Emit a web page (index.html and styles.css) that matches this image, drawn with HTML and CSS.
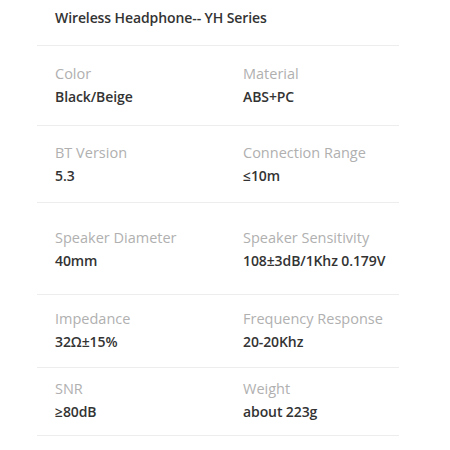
FILE: index.html
```html
<!DOCTYPE html>
<html>
<head>
<meta charset="utf-8">
<link rel="stylesheet" href="styles.css">
</head>
<body>
<div class="specs">
  <div class="row r1">
    <div class="cell">
      <div class="label">Name</div>
      <div class="value">Wireless Headphone-- YH Series</div>
    </div>
  </div>
  <div class="row r2">
    <div class="cell"><div class="label">Color</div><div class="value">Black/Beige</div></div>
    <div class="cell"><div class="label">Material</div><div class="value">ABS+PC</div></div>
  </div>
  <div class="row r3">
    <div class="cell"><div class="label">BT Version</div><div class="value">5.3</div></div>
    <div class="cell"><div class="label">Connection Range</div><div class="value">≤10m</div></div>
  </div>
  <div class="row r4">
    <div class="cell"><div class="label">Speaker Diameter</div><div class="value">40mm</div></div>
    <div class="cell"><div class="label">Speaker Sensitivity</div><div class="value">108±3dB/1Khz 0.179V</div></div>
  </div>
  <div class="row r5">
    <div class="cell"><div class="label">Impedance</div><div class="value">32Ω±15%</div></div>
    <div class="cell"><div class="label">Frequency Response</div><div class="value">20-20Khz</div></div>
  </div>
  <div class="row r6">
    <div class="cell"><div class="label">SNR</div><div class="value">≥80dB</div></div>
    <div class="cell"><div class="label">Weight</div><div class="value">about 223g</div></div>
  </div>
</div>
</body>
</html>
```
FILE: styles.css
```css
html, body {
  margin: 0;
  padding: 0;
  background: #ffffff;
}
body {
  font-family: "Open Sans", "Noto Sans", sans-serif;
  width: 450px;
  height: 450px;
  overflow: hidden;
}
.specs {
  margin: -15px 0 0 37px;
  width: 362px;
}
.row {
  display: grid;
  grid-template-columns: 188px 1fr;
  padding-left: 18px;
  border-bottom: 1px solid #ededed;
}
.cell {
  display: flex;
  flex-direction: column;
  gap: 3px;
}
.r1 .cell { grid-column: 1 / 3; }
.label {
  font-size: 14.5px;
  line-height: 20px;
  color: #b0b0b0;
  font-weight: 400;
}
.value {
  font-size: 14px;
  line-height: 20px;
  color: #333333;
  font-weight: 600;
  letter-spacing: -0.1px;
}
.r1 { padding-top: 0; padding-bottom: 17px; }
.r2 { padding-top: 18px; padding-bottom: 18px; }
.r3 { padding-top: 17px; padding-bottom: 16px; }
.r4 { padding-top: 25px; padding-bottom: 23px; }
.r5 { padding-top: 14px; padding-bottom: 15px; }
.r6 { padding-top: 11px; padding-bottom: 13px; }
```
